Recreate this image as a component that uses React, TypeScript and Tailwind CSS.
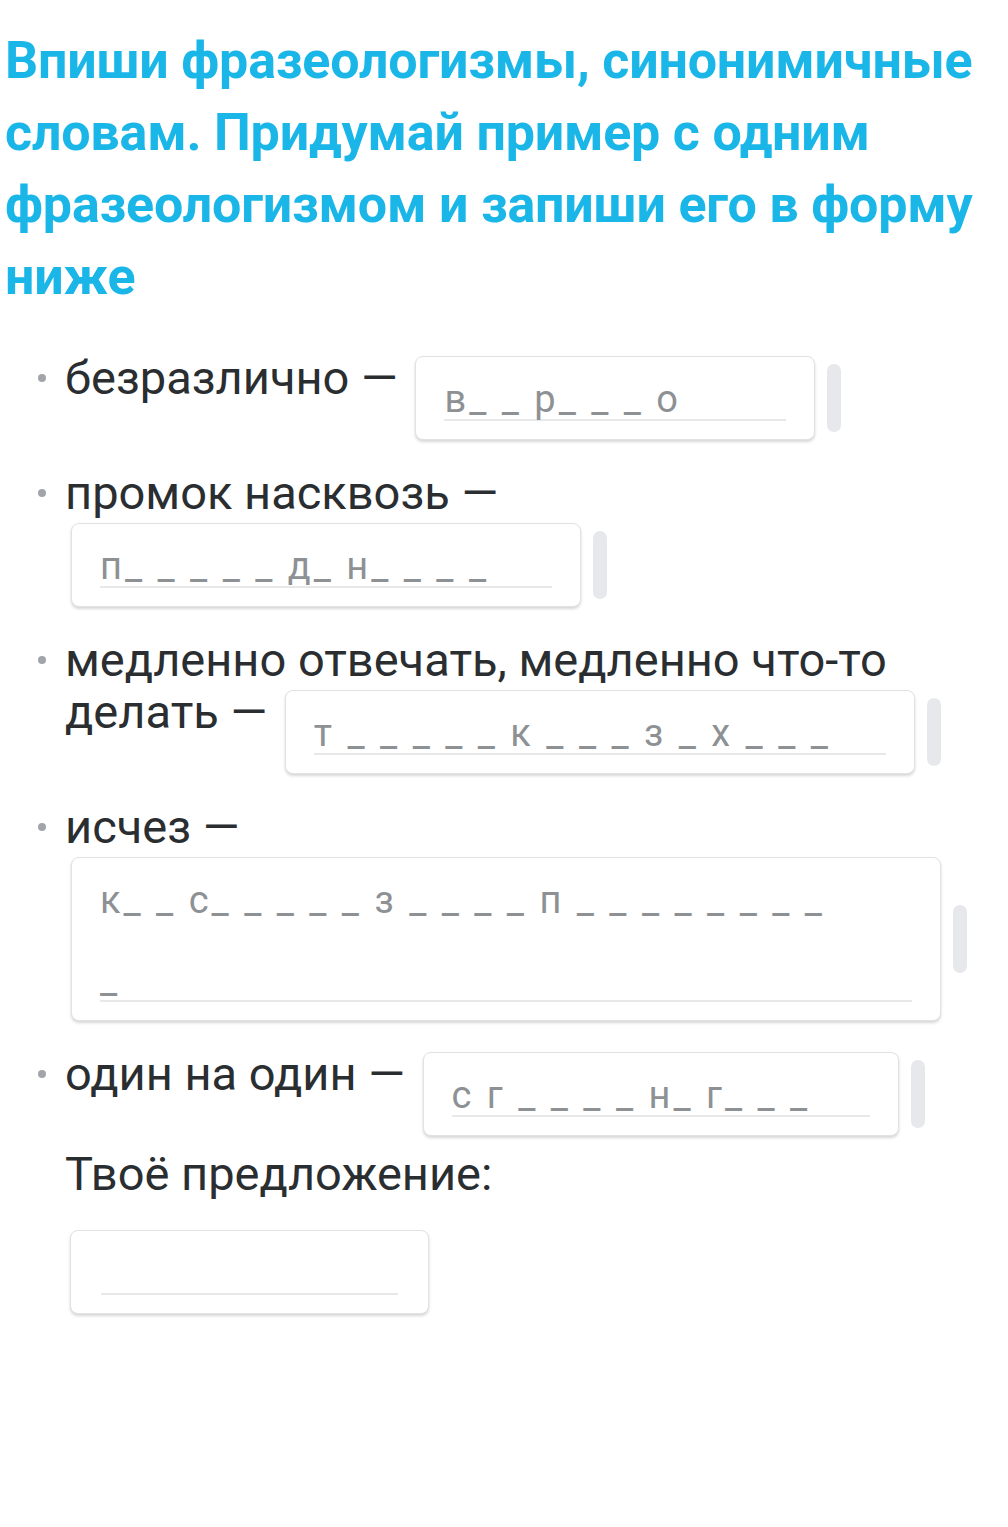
import React from "react";

// placeholder hints for each phrase
type Item = { text: string; hint: string[]; width: number };

const items: Item[] = [
  { text: "безразлично —", hint: ["в_ _ р_ _ _ о"], width: 400 },
  { text: "промок насквозь —", hint: ["п_ _ _ _ _ д_ н_ _ _ _"], width: 510 },
  { text: "медленно отвечать, медленно что-то делать —", hint: ["т _ _ _ _ _ к _ _ _ з _ х _ _ _"], width: 630 },
  { text: "исчез —", hint: ["к_ _ с_ _ _ _ _ з _ _ _ _ п _ _ _ _ _ _ _ _", "_"], width: 870 },
  { text: "один на один —", hint: ["с г _ _ _ _ н_ г_ _ _"], width: 476 },
];

function Field({ hint, width }: { hint: string[]; width: number }) {
  return (
    <span className="ml-[6px] mt-1 mb-1 inline-flex items-center gap-[12px] align-top">
      <span
        className="block rounded-[8px] border border-[#e0e4de] bg-white px-[28px] pb-[18px] pt-[22px] shadow-[0_2px_3px_rgba(0,0,0,0.16)]"
        style={{ width }}
      >
        <span className="block border-b-2 border-[#e6e8ea] font-['Roboto',sans-serif] text-[38px] leading-[40px] tracking-[3px] text-[#8e9194]">
          {hint.map((line, i) => (
            <span key={i} className={i > 0 ? "mt-[40px] block h-[40px]" : "block h-[40px] whitespace-pre"}>
              {line}
            </span>
          ))}
        </span>
      </span>
      <span className="block h-[68px] w-[14px] rounded-full bg-[#e6e8eb]" />
    </span>
  );
}

export default function App() {
  return (
    <div className="min-h-[1527px] bg-white pl-[5px] pt-[25px] font-['Roboto',sans-serif]">
      <h1 className="text-[52px] font-bold leading-[72px] tracking-[-0.2px] text-[#1ab6e8]">
        <span className="block">Впиши фразеологизмы, синонимичные</span>
        <span className="block">словам. Придумай пример с одним</span>
        <span className="block">фразеологизмом и запиши его в форму</span>
        <span className="block">ниже</span>
      </h1>

      <ul className="mt-[39px] pl-[33px] pr-[8px]">
        {items.map((item) => (
          <li key={item.text} className="mb-[23px] flex">
            <span className="flex h-[52px] w-[27px] shrink-0 items-center">
              <span className="block h-[8px] w-[8px] rounded-full bg-[#a1a5a9]" />
            </span>
            <div className="text-[47px] leading-[52px] text-[#2a2e31]">
              {item.text} <Field hint={item.hint} width={item.width} />
            </div>
          </li>
        ))}
      </ul>

      <div className="-mt-[15px] pl-[60px]">
        <p className="text-[47px] leading-[52px] text-[#2a2e31]">Твоё предложение:</p>
        <div className="ml-[5px] mt-[30px] w-[359px] rounded-[8px] border border-[#e0e4de] bg-white px-[30px] pb-[18px] pt-[22px] shadow-[0_2px_3px_rgba(0,0,0,0.16)]">
          <div className="h-[42px] border-b-2 border-[#e6e8ea]" />
        </div>
      </div>
    </div>
  );
}
